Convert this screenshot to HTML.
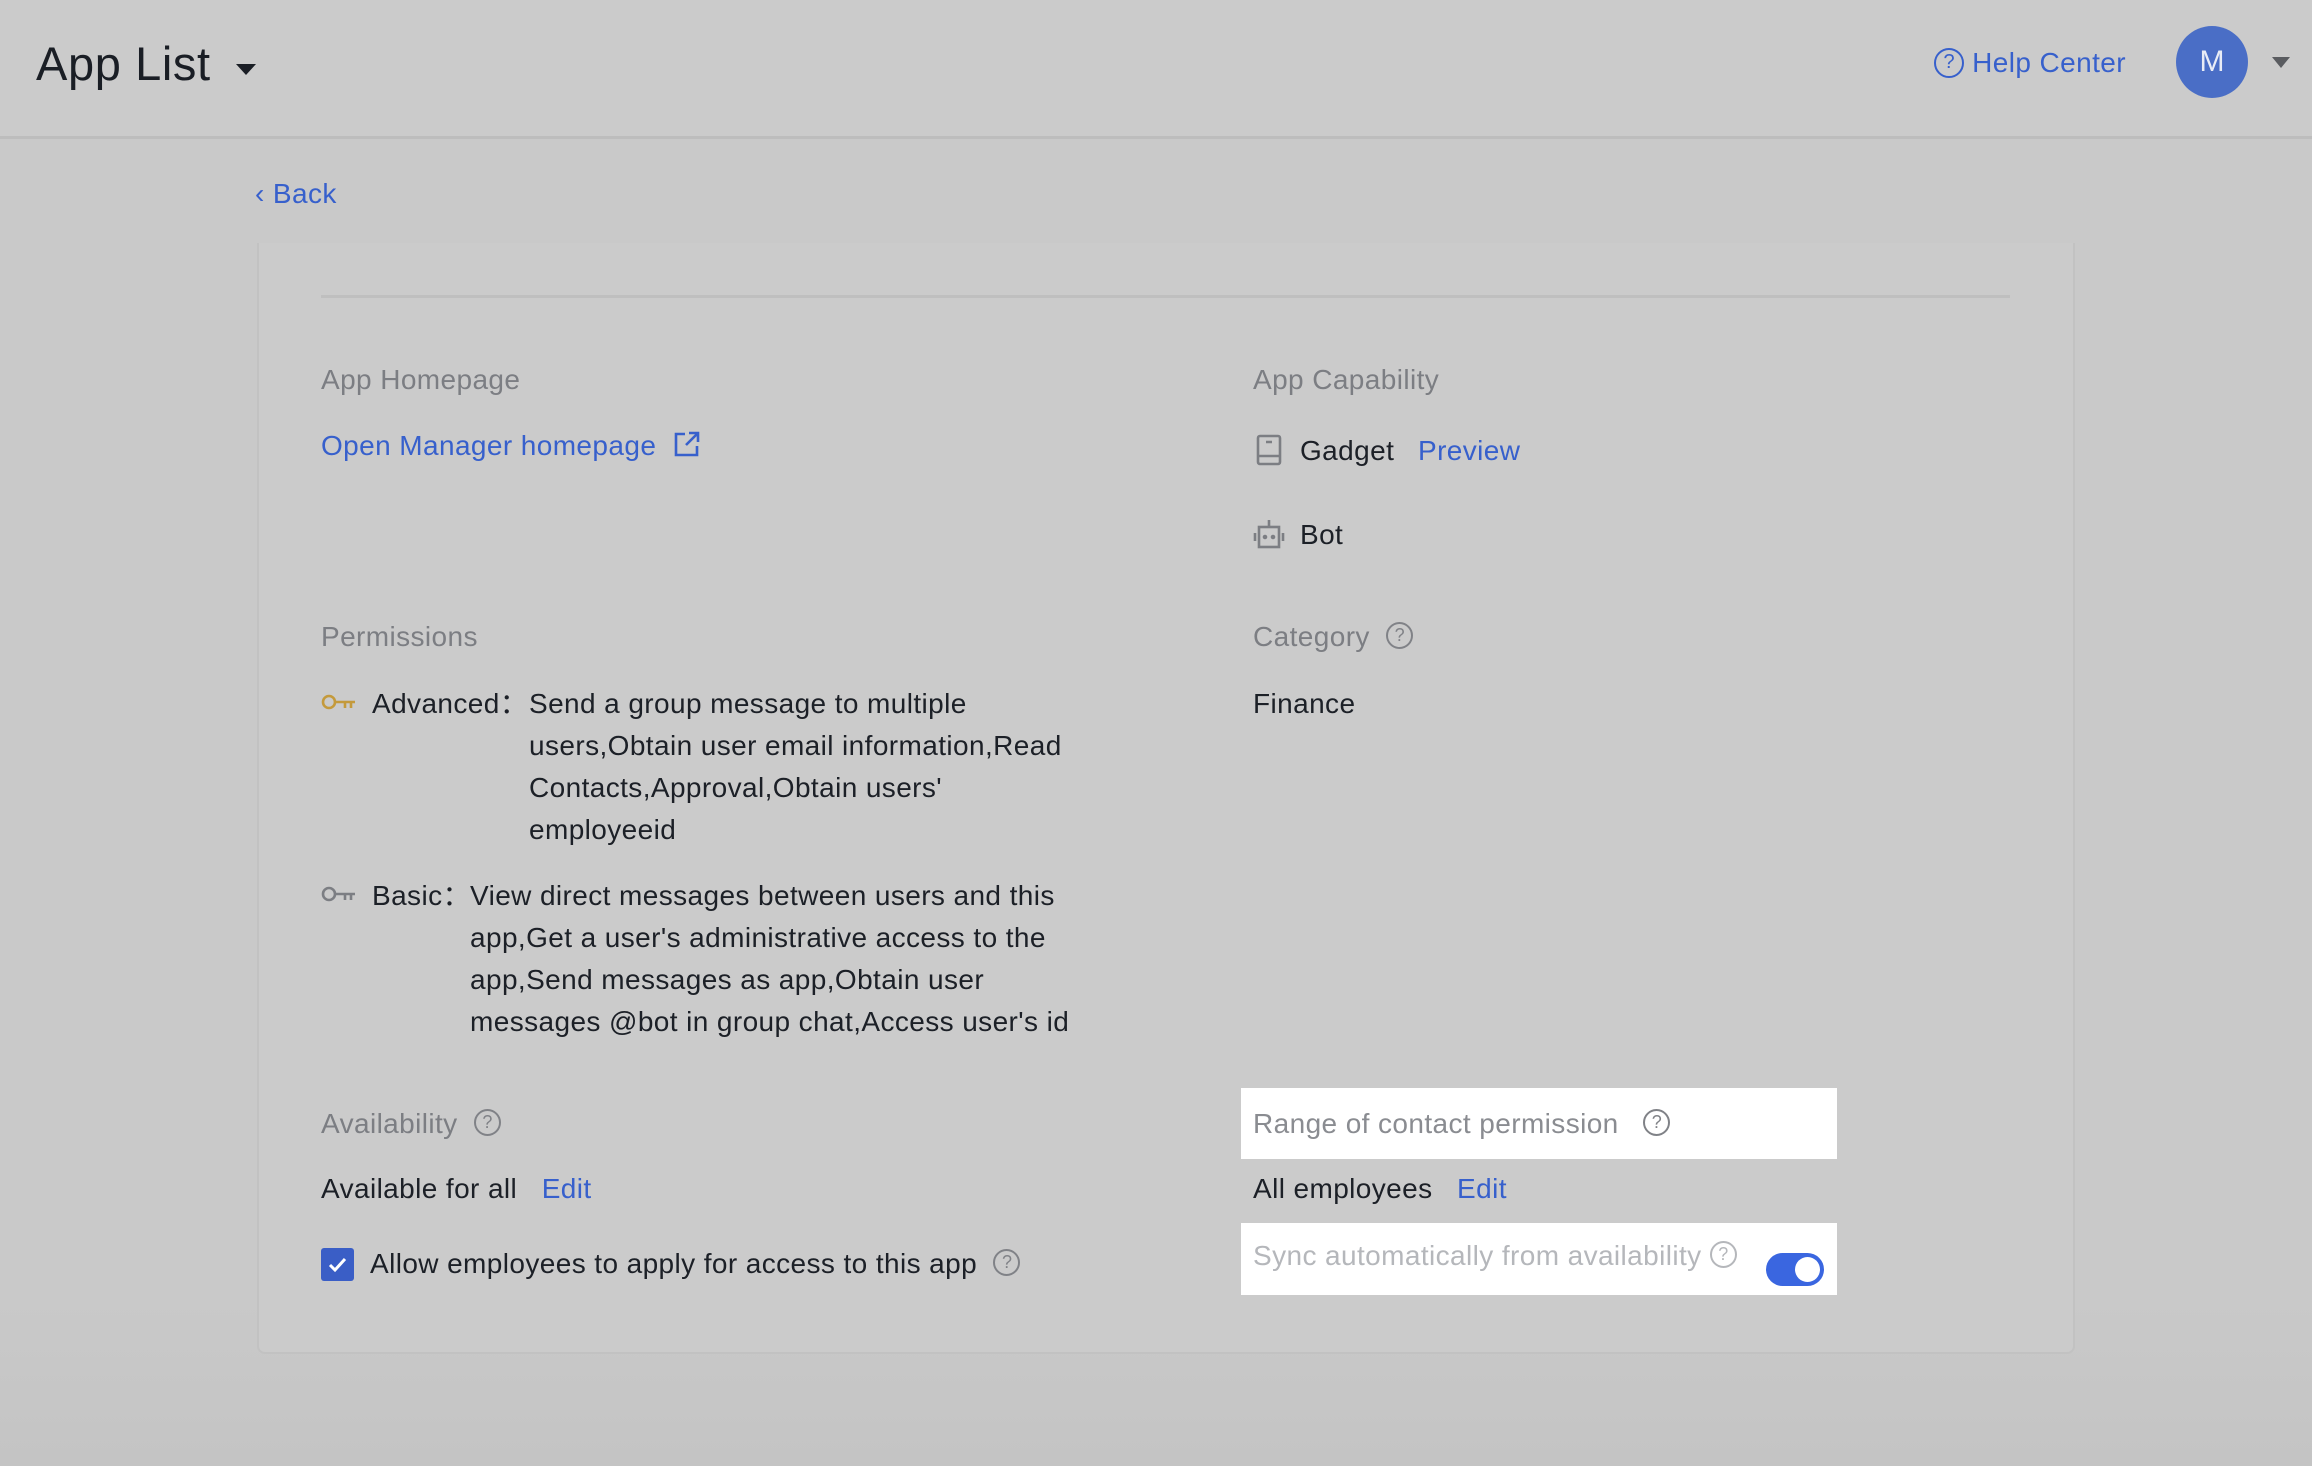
<!DOCTYPE html>
<html><head><meta charset="utf-8"><style>
*{margin:0;padding:0;box-sizing:border-box}
body{width:2312px;height:1466px;background:linear-gradient(#c9c9c9 0,#c9c9c9 1300px,#c4c4c4 1466px);font-family:"Liberation Sans",sans-serif;position:relative;overflow:hidden;color:#1c2027}
.a{position:absolute;white-space:nowrap;font-size:28px;line-height:42px;letter-spacing:0.4px}
.g{color:#7c7e83}
.b{color:#3760cc}
.q{display:inline-block;width:27px;height:27px;border:2.5px solid #808287;border-radius:50%;font-size:18px;line-height:22px;text-align:center;color:#808287;vertical-align:middle;position:relative;top:-3px;letter-spacing:0}
</style></head><body>
<div style="position:absolute;left:0;top:0;width:2312px;height:139px;background:#cbcbcb;border-bottom:3px solid #bdbdbd"></div>
<div class="a" style="left:36px;top:36px;font-size:47px;line-height:56px;color:#1a1e25;letter-spacing:0.6px">App List</div>
<div style="position:absolute;left:236px;top:64px;border-left:10px solid transparent;border-right:10px solid transparent;border-top:11px solid #1a1e25"></div>
<div class="a b" style="left:1934px;top:42px"><span class="q" style="border-color:#3760cc;color:#3760cc;width:30px;height:30px;line-height:25px;font-size:20px;top:-2px">?</span> Help Center</div>
<div style="position:absolute;left:2176px;top:26px;width:72px;height:72px;border-radius:50%;background:#4a6ec6;color:#e8ecf6;font-size:30px;line-height:72px;text-align:center">M</div>
<div style="position:absolute;left:2272px;top:57px;border-left:9px solid transparent;border-right:9px solid transparent;border-top:11px solid #5a5c60"></div>
<div class="a b" style="left:255px;top:173px">&#8249;&nbsp;Back</div>
<div style="position:absolute;left:257px;top:243px;width:1818px;height:1111px;background:#cbcbcb;border:2px solid #c2c2c2;border-top:none;border-radius:0 0 8px 8px"></div>
<div style="position:absolute;left:321px;top:295px;width:1689px;height:3px;background:#bfbfbf"></div>
<div class="a g" style="left:321px;top:359px">App Homepage</div>
<div class="a b" style="left:321px;top:425px">Open Manager homepage&nbsp;
<svg width="28" height="28" viewBox="0 0 28 28" style="vertical-align:middle;position:relative;top:-4px" fill="none" stroke="#3760cc" stroke-width="2.6"><path d="M12 4H3v21h21v-9M16 3h9v9M25 3L13 15"/></svg></div>
<div class="a g" style="left:1253px;top:359px">App Capability</div>
<svg style="position:absolute;left:1256px;top:434px" width="26" height="32" viewBox="0 0 26 32" fill="none" stroke="#7c7e83" stroke-width="2.6"><rect x="2" y="2" width="22" height="28" rx="2"/><path d="M2 22h22M10 8h6"/></svg>
<div class="a" style="left:1300px;top:430px">Gadget</div>
<div class="a b" style="left:1418px;top:430px">Preview</div>
<svg style="position:absolute;left:1253px;top:518px" width="32" height="32" viewBox="0 0 32 32" fill="none" stroke="#7c7e83" stroke-width="2.6"><rect x="6" y="9" width="20" height="20"/><path d="M16 2v7M2 15v8M30 15v8"/><circle cx="12" cy="19" r="1" fill="#7c7e83"/><circle cx="20" cy="19" r="1" fill="#7c7e83"/></svg>
<div class="a" style="left:1300px;top:514px">Bot</div>
<div class="a g" style="left:321px;top:616px">Permissions</div>
<div class="a g" style="left:1253px;top:616px">Category&nbsp; <span class="q">?</span></div>
<div class="a" style="left:1253px;top:683px">Finance</div>
<svg style="position:absolute;left:321px;top:692px" width="36" height="20" viewBox="0 0 36 20" fill="none" stroke="#c49a3c" stroke-width="2.6"><circle cx="8" cy="10" r="6"/><path d="M14 10h20M24 10v6M30 10v6"/></svg>
<div class="a" style="left:372px;top:683px">Advanced：</div>
<div class="a" style="left:529px;top:683px;white-space:normal;width:545px">Send a group message to multiple users,Obtain user email information,Read Contacts,Approval,Obtain users' employeeid</div>
<svg style="position:absolute;left:321px;top:884px" width="36" height="20" viewBox="0 0 36 20" fill="none" stroke="#7c7e83" stroke-width="2.6"><circle cx="8" cy="10" r="6"/><path d="M14 10h20M24 10v6M30 10v6"/></svg>
<div class="a" style="left:372px;top:875px">Basic：</div>
<div class="a" style="left:470px;top:875px;white-space:normal;width:605px">View direct messages between users and this app,Get a user's administrative access to the app,Send messages as app,Obtain user messages @bot in group chat,Access user's id</div>
<div class="a g" style="left:321px;top:1103px">Availability&nbsp; <span class="q">?</span></div>
<div class="a" style="left:321px;top:1168px">Available for all&nbsp;&nbsp; <span class="b">Edit</span></div>
<div style="position:absolute;left:321px;top:1248px;width:33px;height:33px;background:#3a5ec6;border-radius:3px"><svg width="33" height="33" viewBox="0 0 33 33"><path d="M9 17l5 5 10-11" stroke="#fff" stroke-width="3" fill="none"/></svg></div>
<div class="a" style="left:370px;top:1243px">Allow employees to apply for access to this app&nbsp; <span class="q">?</span></div>
<div style="position:absolute;left:1241px;top:1088px;width:596px;height:71px;background:#fff"></div>
<div class="a" style="left:1253px;top:1103px;color:#8a8c91">Range of contact permission&nbsp;&nbsp; <span class="q">?</span></div>
<div class="a" style="left:1253px;top:1168px">All employees&nbsp;&nbsp; <span class="b">Edit</span></div>
<div style="position:absolute;left:1241px;top:1223px;width:596px;height:72px;background:#fff"></div>
<div class="a" style="left:1253px;top:1235px;color:#b5b7bb">Sync automatically from availability <span class="q" style="border-color:#b5b7bb;color:#b5b7bb">?</span></div>
<div style="position:absolute;left:1766px;top:1253px;width:58px;height:33px;border-radius:17px;background:#3a66e0"><div style="position:absolute;right:4px;top:4px;width:25px;height:25px;border-radius:50%;background:#fff"></div></div>
</body></html>
